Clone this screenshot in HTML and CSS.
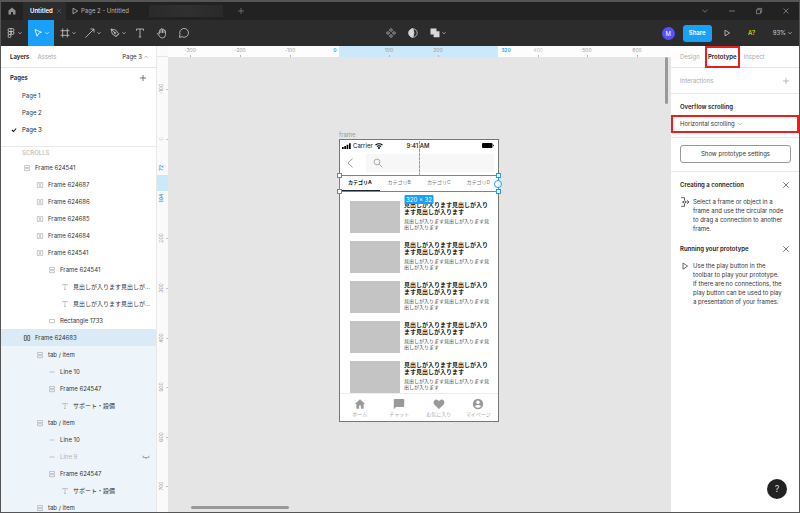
FILE: index.html
```
<!DOCTYPE html>
<html lang="en">
<head>
<meta charset="utf-8">
<title>Untitled</title>
<link rel="stylesheet" href="styles.css">
</head>
<body>
<svg class="defs" aria-hidden="true">
  <symbol id="chev" viewBox="0 0 6 6"><path d="M1.5 2.3 3 3.8 4.5 2.3" fill="none" stroke="currentColor" stroke-width=".8"/></symbol>
  <symbol id="play" viewBox="0 0 8 8"><path d="M2 1.2 6.6 4 2 6.8Z" fill="none" stroke="currentColor" stroke-width=".8"/></symbol>
  <symbol id="plus" viewBox="0 0 8 8"><path d="M4 1v6M1 4h6" fill="none" stroke="currentColor" stroke-width=".8"/></symbol>
  <symbol id="cross" viewBox="0 0 8 8"><path d="m1.3 1.3 5.4 5.4M6.7 1.3 1.3 6.7" fill="none" stroke="currentColor" stroke-width=".8"/></symbol>
  <symbol id="rows" viewBox="0 0 8 8"><path d="M1.5 1.5h5v2h-5zM1.5 4.7h5v2h-5z" fill="none" stroke="currentColor" stroke-width=".7"/></symbol>
  <symbol id="cols" viewBox="0 0 8 8"><path d="M1.3 1.5h2v5h-2zM4.7 1.5h2v5h-2z" fill="none" stroke="currentColor" stroke-width=".7"/></symbol>
  <symbol id="tee" viewBox="0 0 8 8"><path d="M1.5 2.6V1.5h5v1.1M4 1.5v5M3 6.5h2" fill="none" stroke="currentColor" stroke-width=".7"/></symbol>
  <symbol id="rect" viewBox="0 0 8 8"><path d="M1.5 2.5h5v3.2h-5z" fill="none" stroke="currentColor" stroke-width=".7"/></symbol>
  <symbol id="line" viewBox="0 0 8 8"><path d="M1.5 4h5" fill="none" stroke="currentColor" stroke-width=".7"/></symbol>
</svg>

<header class="titlebar">
  <button class="home" aria-label="Home"><svg viewBox="0 0 8 8"><path d="M.5 3.6 4 .5l3.500 3.100V7.500H5V5H3v2.500H.5Z" fill="#8f8f8f"/></svg></button>
  <div class="tab active"><a href="#">Untitled</a><button aria-label="Close tab"><svg class="i6"><use href="#cross"/></svg></button></div>
  <a class="tab" href="#"><svg class="i8"><use href="#play"/></svg>Page 2 - Untitled</a>
  <span class="tab-hidden"></span>
  <button class="newtab" aria-label="New tab"><svg class="i8"><use href="#plus"/></svg></button>
  <div class="window">
    <button aria-label="More"><svg viewBox="0 0 8 8"><path d="M1.500 2.700 4 5.200l2.500-2.500"/></svg></button>
    <button aria-label="Minimise"><svg viewBox="0 0 8 8"><path d="M1 4h6"/></svg></button>
    <button aria-label="Restore"><svg viewBox="0 0 8 8"><path d="M1.500 2.700h4v4h-4zM2.700 2.700V1.400h4v4H5.500"/></svg></button>
    <button aria-label="Close"><svg viewBox="0 0 8 8"><path d="m1.500 1.500 5 5M6.500 1.500l-5 5"/></svg></button>
  </div>
</header>

<div class="toolbar">
  <div class="tools">
    <button class="tool drop menu" aria-label="Menu"><svg class="i12" viewBox="0 0 12 12"><path d="M6 1.500H4.500a1.500 1.500 0 0 0 0 3H6zM6 1.500h1.500a1.500 1.500 0 0 1 0 3H6M6 4.500H4.500a1.500 1.500 0 0 0 0 3H6zM6 7.500H4.500A1.500 1.500 0 1 0 6 9z"/><circle cx="7.500" cy="6" r="1.500"/></svg><svg class="i6"><use href="#chev"/></svg></button>
    <button class="tool drop move" aria-label="Move"><svg class="i12" viewBox="0 0 12 12"><path d="M3 2.500 9.500 5.300 6.700 6.300 5 9.200Z"/></svg><svg class="i6"><use href="#chev"/></svg></button>
    <button class="tool drop" aria-label="Frame"><svg class="i12" viewBox="0 0 12 12"><path d="M3.700 1.500v9M8.300 1.500v9M1.500 3.700h9M1.500 8.300h9"/></svg><svg class="i6"><use href="#chev"/></svg></button>
    <button class="tool drop" aria-label="Line"><svg class="i12" viewBox="0 0 12 12"><path d="m1.500 10.500 8.500-8.500M6.500 2H10v3.500"/></svg><svg class="i6"><use href="#chev"/></svg></button>
    <button class="tool drop" aria-label="Pen"><svg class="i12" viewBox="0 0 12 12"><path d="m2 2 5 1.200 2.600 3.600L7 9.400 3.300 7Zm0 0 3.600 3.600M6.800 9.800l3.200-3.200"/><circle cx="6" cy="6" r=".9"/></svg><svg class="i6"><use href="#chev"/></svg></button>
    <button class="tool" aria-label="Text"><svg class="i12" viewBox="0 0 12 12"><path d="M2.500 3.700V2h7v1.700M6 2v8M4.700 10h2.600"/></svg></button>
    <button class="tool" aria-label="Hand"><svg class="i12" viewBox="0 0 12 12"><path d="M3.600 6.800V3.100q.7-.8 1.400 0V2q.7-.9 1.500 0v.5q.8-.7 1.500.1v.9q.8-.6 1.400.2L9.600 7.500Q9.200 11 6.500 11 4.300 11 3.300 9L1.500 6.600q.3-1 1.200-.6zM5 3v3M6.500 2.500V6M8 3.300V6"/></svg></button>
    <button class="tool" aria-label="Comment"><svg class="i12" viewBox="0 0 12 12"><path d="M1.400 10.400 2 7.400A4.400 4.400 0 1 1 4 9.700Z"/></svg></button>
  </div>
  <div class="middle">
    <button class="tool" aria-label="Component"><svg class="i12" viewBox="0 0 12 12"><path d="M6 1.500 7.500 3 6 4.500 4.500 3ZM6 7.500 7.500 9 6 10.500 4.500 9ZM3 4.500 4.500 6 3 7.500 1.500 6ZM9 4.500 10.500 6 9 7.500 7.500 6Z"/></svg></button>
    <button class="tool" aria-label="Mask"><svg class="i12" viewBox="0 0 12 12"><circle cx="6" cy="6" r="4.200"/><path d="M6 1.800a4.200 4.200 0 0 0 0 8.400Q8 6 6 1.800Z" fill="#d8d8d8"/></svg></button>
    <button class="tool drop" aria-label="Boolean"><svg class="i12" viewBox="0 0 12 12"><path d="M1.500 1.500h6v2.800h3v6H4.600V7.500H1.500Z" fill="#d8d8d8" stroke="none"/></svg><svg class="i6"><use href="#chev"/></svg></button>
  </div>
  <div class="right">
    <span class="avatar">M</span>
    <button class="share">Share</button>
    <button class="present" aria-label="Present"><svg class="i8"><use href="#play"/></svg></button>
    <button class="fonts">A?</button>
    <button class="zoom">93%<svg class="i6"><use href="#chev"/></svg></button>
  </div>
</div>

<main>
  <aside class="left">
    <div class="ltabs"><a class="on" href="#">Layers</a><a href="#">Assets</a><button>Page 3<svg class="i6 up"><use href="#chev"/></svg></button></div>
    <section class="pages">
      <h2>Pages<button aria-label="Add page"><svg class="i8"><use href="#plus"/></svg></button></h2>
      <ul>
        <li>Page 1</li>
        <li>Page 2</li>
        <li class="current"><svg class="i6 check" viewBox="0 0 6 6"><path d="m1 3 1.500 1.500L5.200 1.500" fill="none" stroke="#111" stroke-width="1.100"/></svg>Page 3</li>
      </ul>
    </section>
    <section class="layers">
      <h3>SCROLLS</h3>
      <ul>
        <li class="d0"><svg class="i8"><use href="#rows"/></svg>Frame 624541</li>
        <li class="d1"><svg class="i8"><use href="#cols"/></svg>Frame 624687</li>
        <li class="d1"><svg class="i8"><use href="#cols"/></svg>Frame 624686</li>
        <li class="d1"><svg class="i8"><use href="#cols"/></svg>Frame 624685</li>
        <li class="d1"><svg class="i8"><use href="#cols"/></svg>Frame 624684</li>
        <li class="d1"><svg class="i8"><use href="#cols"/></svg>Frame 624541</li>
        <li class="d2"><svg class="i8"><use href="#rows"/></svg>Frame 624541</li>
        <li class="d3"><svg class="i8"><use href="#tee"/></svg>見出しが入ります見出しが...</li>
        <li class="d3"><svg class="i8"><use href="#tee"/></svg>見出しが入ります見出しが...</li>
        <li class="d2"><svg class="i8"><use href="#rect"/></svg>Rectangle 1733</li>
        <li class="d0 selected"><svg class="i8"><use href="#cols"/></svg>Frame 624683</li>
        <li class="d1 within"><svg class="i8"><use href="#rows"/></svg>tab / item</li>
        <li class="d2 within"><svg class="i8"><use href="#line"/></svg>Line 10</li>
        <li class="d2 within"><svg class="i8"><use href="#rows"/></svg>Frame 624547</li>
        <li class="d3 within"><svg class="i8"><use href="#tee"/></svg>サポート・設備</li>
        <li class="d1 within"><svg class="i8"><use href="#rows"/></svg>tab / item</li>
        <li class="d2 within"><svg class="i8"><use href="#line"/></svg>Line 10</li>
        <li class="d2 within hidden"><svg class="i8"><use href="#line"/></svg>Line 9<svg class="i8 eye" viewBox="0 0 8 8"><path d="M.5 3Q4 6.500 7.500 3M1.500 4l-.7 1M4 4.800V6M6.500 4l.7 1" fill="none" stroke="#777" stroke-width=".7"/></svg></li>
        <li class="d2 within"><svg class="i8"><use href="#rows"/></svg>Frame 624547</li>
        <li class="d3 within"><svg class="i8"><use href="#tee"/></svg>サポート・設備</li>
        <li class="d1 within"><svg class="i8"><use href="#rows"/></svg>tab / item</li>
      </ul>
    </section>
  </aside>

  <div class="rulerv">
    <svg width="11" height="466">
      <path d="M0 10.500h11" stroke="#e6e6e6"/>
      <rect y="129" width="11" height="16" fill="#cce8fb"/>
      <path d="M9 43.500h2M9 93.500h2M9 192.500h2M9 242.500h2M9 292.500h2M9 341.500h2M9 391.500h2M9 440.500h2" stroke="#c4c4c4"/>
      <g text-anchor="middle">
        <text transform="translate(6 43) rotate(-90)">-100</text>
        <text transform="translate(6 93) rotate(-90)" opacity=".5">0</text>
        <text class="hot" transform="translate(6 122) rotate(-90)">72</text>
        <text class="hot" transform="translate(6 152) rotate(-90)">104</text>
        <text transform="translate(6 192) rotate(-90)">200</text>
        <text transform="translate(6 242) rotate(-90)">300</text>
        <text transform="translate(6 292) rotate(-90)">400</text>
        <text transform="translate(6 341) rotate(-90)">500</text>
        <text transform="translate(6 391) rotate(-90)">600</text>
        <text transform="translate(6 440) rotate(-90)">700</text>
      </g>
    </svg>
  </div>

  <div class="stage">
    <div class="rulerh">
      <svg width="503" height="11">
        <rect x="171" width="159" height="11" fill="#cce8fb"/>
        <path d="M22.500 9v2M72.500 9v2M122.500 9v2M221.500 9v2M270.500 9v2M370.500 9v2M419.500 9v2M469.500 9v2" stroke="#b8b8b8"/>
        <g text-anchor="middle">
          <text x="22" y="6">-300</text><text x="72" y="6">-200</text><text x="122" y="6">-100</text>
          <text class="hot" x="167" y="6">0</text><text x="221" y="6">100</text><text x="270" y="6">200</text>
          <text class="hot" x="338" y="6">320</text><text x="370" y="6" opacity=".6">400</text><text x="419" y="6">500</text><text x="469" y="6">600</text>
        </g>
      </svg>
    </div>
    <div class="canvas">
      <div class="artboard">
        <span class="label">frame</span>
        <div class="phone">
          <div class="status">
            <span><svg class="signal" viewBox="0 0 9 6"><path d="M0 4h1.700v2H0zM2.300 3H4v3H2.300zM4.600 1.700h1.700V6H4.600zM7 .3h1.700V6H7z"/></svg>Carrier<svg class="wifi" viewBox="0 0 8 6"><path d="M.5 2Q4-.6 7.500 2M1.900 3.500Q4 2 6.100 3.500" fill="none" stroke="#000" stroke-width="1.100"/><circle cx="4" cy="5" r="1"/></svg></span>
            <b>9:41 AM</b>
            <svg class="battery" viewBox="0 0 12 5"><rect width="10.500" height="5" rx="1"/><path d="M11 1.700h.7v1.600H11z"/></svg>
          </div>
          <div class="search">
            <svg class="back" viewBox="0 0 8 10"><path d="M6.500.7 2 5l4.500 4.300" fill="none" stroke="#999"/></svg>
            <label><svg viewBox="0 0 10 10"><circle cx="4" cy="4" r="2.900" fill="none" stroke="#aaa"/><path d="m6.200 6.200 3 3" stroke="#aaa"/></svg><input type="search" aria-label="Search"></label>
          </div>
          <nav class="cats"><a class="on" href="#">カテゴリA</a><a href="#">カテゴリB</a><a href="#">カテゴリC</a><a href="#">カテゴリD</a></nav>
          <div class="feed">
            <article><i></i><div><h4>見出しが入ります見出しが入ります見出しが入ります</h4><p>見出しが入ります見出しが入ります見出しが入ります</p></div></article>
            <article><i></i><div><h4>見出しが入ります見出しが入ります見出しが入ります</h4><p>見出しが入ります見出しが入ります見出しが入ります</p></div></article>
            <article><i></i><div><h4>見出しが入ります見出しが入ります見出しが入ります</h4><p>見出しが入ります見出しが入ります見出しが入ります</p></div></article>
            <article><i></i><div><h4>見出しが入ります見出しが入ります見出しが入ります</h4><p>見出しが入ります見出しが入ります見出しが入ります</p></div></article>
            <article><i></i><div><h4>見出しが入ります見出しが入ります見出しが入ります</h4><p>見出しが入ります見出しが入ります見出しが入ります</p></div></article>
          </div>
          <nav class="bottom">
            <a href="#"><svg viewBox="0 0 12 12"><path d="M6 1.300.9 6h1.500v4.700h2.700V7.500h1.800v3.200h2.700V6h1.500Z"/></svg>ホーム</a>
            <a href="#"><svg viewBox="0 0 12 12"><path d="M1.700 1h8.600q.9 0 .9.900v6.200q0 .9-.9.900H3L.8 11.200V1.900Q.8 1 1.700 1Z"/></svg>チャット</a>
            <a href="#"><svg viewBox="0 0 12 12"><path d="M6 11 1.700 7Q-.3 4.500 1.300 2.500 3.600.2 6 3 8.400.2 10.700 2.500 12.300 4.500 10.300 7Z"/></svg>お気に入り</a>
            <a href="#"><svg viewBox="0 0 12 12"><circle cx="6" cy="6" r="5.200"/><circle cx="6" cy="4.300" r="1.700" fill="#fff"/><path d="M2.800 8.200Q6 5.600 9.200 8.200 6 11.500 2.800 8.200Z" fill="#fff"/></svg>マイページ</a>
          </nav>
        </div>
        <div class="selection"><s class="tl"></s><s class="tr"></s><s class="bl"></s><s class="br"></s><s class="node"></s><span class="guide"></span><span class="size">320 × 32</span></div>
      </div>
      <span class="vbar"></span><span class="hbar"></span>
    </div>
  </div>

  <aside class="inspect">
    <div class="rtabs"><a href="#">Design</a><a class="on" href="#">Prototype</a><a href="#">Inspect</a></div>
    <section class="inter">Interactions<button aria-label="Add interaction"><svg class="i8"><use href="#plus"/></svg></button></section>
    <section class="overflow"><h2>Overflow scrolling</h2><button class="select">Horizontal scrolling<svg class="i6"><use href="#chev"/></svg></button></section>
    <section class="settings"><button>Show prototype settings</button></section>
    <section class="tips">
      <h2>Creating a connection<button aria-label="Dismiss"><svg class="i8"><use href="#cross"/></svg></button></h2>
      <div class="tip"><svg viewBox="0 0 10 10"><path d="M1 .7h3.500v2.600M4.500 6.700v2.600H1M2 5h7M7.200 3.200 9 5 7.200 6.800" fill="none" stroke="#444" stroke-width=".8"/><circle cx="4.500" cy="5" r="1.200" fill="#fff" stroke="#444" stroke-width=".8"/></svg><p>Select a frame or object in a frame and use the circular node to drag a connection to another frame.</p></div>
      <h2>Running your prototype<button aria-label="Dismiss"><svg class="i8"><use href="#cross"/></svg></button></h2>
      <div class="tip"><svg viewBox="0 0 10 10"><path d="M3 2v6.200L7.600 5.100Z" fill="none" stroke="#444" stroke-width=".8"/></svg><p>Use the play button in the toolbar to play your prototype. If&nbsp;there are no connections, the play button can be used to play a&nbsp;presentation of your frames.</p></div>
    </section>
    <button class="help">?</button>
  </aside>
</main>
</body>
</html>
```
FILE: styles.css
```
* { box-sizing: border-box; margin: 0; padding: 0; }
body {
  height: 100vh; display: flex; flex-direction: column; overflow: hidden;
  border: 1px solid #555; border-top-width: 2px;
  font: 6px/10px Inter, "Noto Sans CJK JP", sans-serif; color: #333; background: #fff;
}
button, input { font: inherit; color: inherit; background: none; border: 0; }
button { display: flex; align-items: center; justify-content: center; }
a { color: inherit; text-decoration: none; }
ul { list-style: none; }
svg { flex: none; display: block; }
.defs { position: absolute; width: 0; height: 0; }
.i6 { width: 6px; height: 6px; }
.i8 { width: 8px; height: 8px; }
.i12 { width: 12px; height: 12px; }

.titlebar { flex: none; height: 18px; display: flex; align-items: center; background: #222; color: #b5b5b5; }
.home { width: 22px; height: 18px; }
.home svg { width: 8px; height: 8px; }
.tab { height: 18px; display: flex; align-items: center; gap: 2px; padding-left: 5px; }
.tab.active { width: 43px; padding: 0 4px 0 7px; justify-content: space-between; background: #2c2c2c; color: #fff; font-weight: 600; }
.tab.active button { color: #666; }
.tab-hidden { width: 74px; height: 12px; margin-left: 20px; background: linear-gradient(90deg, #2a2a2a, #303030 50%, #2a2a2a); }
.newtab { width: 18px; margin-left: 9px; color: #777; }
.window { margin-left: auto; display: flex; }
.window button { width: 27px; height: 18px; }
.window svg { width: 8px; height: 8px; fill: none; stroke: #888; stroke-width: .8; }

.toolbar { flex: none; height: 26px; display: grid; grid-template-columns: 1fr auto 1fr; background: #2c2c2c; color: #ccc; }
.tools, .middle, .right { display: flex; align-items: center; }
.middle { padding-left: 28px; }
.tool { width: 22px; height: 26px; }
.tool.drop { width: 25px; justify-content: flex-start; padding-left: 5px; }
.tool.menu { width: 27px; padding-left: 4px; }
.tool.move { width: 26px; padding-left: 4px; background: #18a0fb; color: #fff; }
.tool .i12 { fill: none; stroke: currentColor; stroke-width: .8; }
.right { justify-content: flex-end; padding-right: 6px; }
.avatar { width: 13px; height: 13px; border-radius: 50%; background: #5551ff; color: #fff; text-align: center; line-height: 13px; }
.share { width: 29px; height: 17px; margin: 0 11px 0 8px; border-radius: 3px; background: #18a0fb; color: #fff; font-weight: 600; }
.present { width: 8px; }
.fonts { width: 8px; margin: 0 17px; color: #d1c414; font-weight: 600; }
.zoom { gap: 1px; }

main { flex: 1; min-height: 0; display: flex; }
.left { flex: none; width: 156px; overflow: hidden; border-right: 1px solid #e8e8e8; }
.ltabs { height: 22px; display: flex; align-items: center; gap: 8px; padding: 0 7px 0 9px; border-bottom: 1px solid #e5e5e5; color: #aaa; }
.ltabs .on, h2 { color: #222; font-weight: 600; }
.ltabs button { margin-left: auto; gap: 1px; color: #333; }
.up { transform: rotate(180deg); }
.ltabs .i6, .select .i6 { color: #999; }
h2 { font-size: inherit; display: flex; align-items: center; justify-content: space-between; }
h2 button { color: #555; }
.pages { padding-bottom: 8px; border-bottom: 1px solid #e8e8e8; }
.pages h2 { height: 19px; padding: 0 9px; }
.pages li { height: 17px; display: flex; align-items: center; padding-left: 21px; }
.pages .current { padding-left: 10px; gap: 5px; color: #222; }
.layers h3 { height: 12px; padding-left: 21px; font: 500 6px/12px Inter, sans-serif; color: #bbb; }
.layers li { height: 17px; display: flex; align-items: center; gap: 4px; padding-right: 6px; white-space: nowrap; }
.layers li > svg { color: #b0b0b0; }
.d0 { padding-left: 22px; }
.d1 { padding-left: 35px; }
.d2 { padding-left: 47px; }
.d3 { padding-left: 60px; }
.selected { background: #daebf7; }
.layers .selected > svg { color: #444; }
.within { background: #edf5fa; }
.layers .hidden { color: #b3b3b3; }
.eye { margin-left: auto; }

.rulerv { flex: none; width: 11px; overflow: hidden; background: #fafafa; }
.rulerh { flex: none; height: 11px; overflow: hidden; background: #fdfdfd; }
.rulerv text, .rulerh text { font: 5px Inter, sans-serif; fill: #999; }
.rulerv .hot, .rulerh .hot { fill: #18a0fb; font-weight: 600; }
.stage { flex: 1; min-width: 0; display: flex; flex-direction: column; }
.canvas { flex: 1; position: relative; overflow: hidden; background: #e5e5e5; }
.artboard { position: absolute; left: 171px; top: 82px; width: 160px; }
.label { position: absolute; left: 0; top: -9px; line-height: 9px; color: #999; }
.phone { border: 1px solid #777; background: #fff; }
.status { height: 11px; display: grid; grid-template-columns: 1fr auto 1fr; align-items: center; padding: 0 4px 0 2px; color: #111; line-height: 11px; }
.status span { display: flex; align-items: center; gap: 2px; }
.status b { font-weight: 500; }
.signal { width: 9px; height: 6px; }
.wifi { width: 8px; height: 6px; }
.battery { width: 12px; height: 5px; justify-self: end; }
.search { height: 24px; display: flex; align-items: center; padding: 0 4px 0 6px; }
.back { width: 8px; height: 10px; }
.search label { flex: 1; height: 18px; margin-left: 12px; padding-left: 7px; display: flex; align-items: center; background: #f7f7f7; }
.search label svg { width: 10px; height: 10px; }
.search input { flex: 1; min-width: 0; height: 16px; outline: 0; }
.cats { height: 16px; display: grid; grid-template-columns: repeat(4, 1fr); font-size: 5px; line-height: 15px; text-align: center; color: #777; }
.cats .on { color: #111; font-weight: 700; border-bottom: 1px solid #1d2733; }
.feed { height: 202px; overflow: hidden; padding: 10px 8px 0 10px; }
article { height: 32px; margin-bottom: 8px; display: flex; gap: 4px; }
article i { flex: none; width: 50px; background: #c4c4c4; }
article h4 { font-size: 6px; line-height: 7px; font-weight: 700; color: #222; }
article p { margin-top: 3px; font-size: 5px; line-height: 6px; color: #444; }
.bottom { height: 28px; padding-top: 4px; border-top: 1px solid #eee; display: grid; grid-template-columns: repeat(4, 1fr); font-size: 5px; line-height: 8px; color: #aaa; }
.bottom a { display: flex; flex-direction: column; align-items: center; white-space: nowrap; }
.bottom svg { width: 12px; height: 12px; fill: #999; }

.selection { position: absolute; left: 0; right: 0; top: 36px; height: 17px; border: 1px solid #18a0fb; }
.selection s { position: absolute; width: 5px; height: 5px; background: #fff; border: 1px solid #18a0fb; }
.selection .tl, .selection .bl { left: -3px; }
.selection .tr, .selection .br { right: -3px; }
.tl, .tr { top: -3px; }
.bl, .br { bottom: -3px; }
.selection .node { width: 8px; height: 8px; right: -4px; top: 4px; border-radius: 50%; }
.guide { position: absolute; left: 50%; bottom: 100%; width: 1px; height: 35px; background: repeating-linear-gradient(#4db5f7 0 3px, #b5e0fb 3px 4px); }
.size { position: absolute; top: 19px; left: 50%; transform: translateX(-50%); width: 29px; height: 9px; border-radius: 1px; background: #18a0fb; color: #fff; line-height: 9px; text-align: center; white-space: nowrap; }
.vbar { position: absolute; right: 3px; top: 0; width: 3px; height: 47px; border-radius: 2px; background: #999; }
.hbar { position: absolute; left: 23px; bottom: 3px; width: 98px; height: 3px; border-radius: 2px; background: #999; }

.inspect { flex: none; width: 128px; position: relative; }
.inspect section { border-bottom: 1px solid #e8e8e8; }
.rtabs { height: 22px; display: flex; align-items: stretch; border-bottom: 1px solid #e5e5e5; padding-left: 9px; line-height: 21px; color: #aaa; }
.rtabs .on { width: 35px; margin: 0 4px 0 5px; height: 22px; border: 2px solid #ee1c1c; color: #222; font-weight: 600; line-height: 17px; display: flex; justify-content: center; }
.inter { height: 26px; display: flex; align-items: center; justify-content: space-between; padding: 0 9px; color: #aaa; }
.overflow { height: 44px; padding-top: 4px; }
.overflow h2 { height: 17px; padding-left: 9px; }
.select { width: 100%; height: 18px; justify-content: flex-start; gap: 2px; padding-left: 7px; border: 2px solid #ee1c1c; }
.settings { padding: 7px 8px 8px 9px; }
.settings button { width: 100%; height: 18px; border: 1px solid #999; border-radius: 3px; }
.inspect .tips { border: 0; padding: 0 9px; }
.tips h2 { height: 25px; }
.tip { display: flex; gap: 3px; margin-bottom: 3px; padding-right: 4px; line-height: 9px; }
.tip svg { width: 10px; height: 10px; }
.help { position: absolute; right: 12px; bottom: 13px; width: 20px; height: 20px; border-radius: 50%; background: #222; color: #ddd; font-size: 9px; }
```
